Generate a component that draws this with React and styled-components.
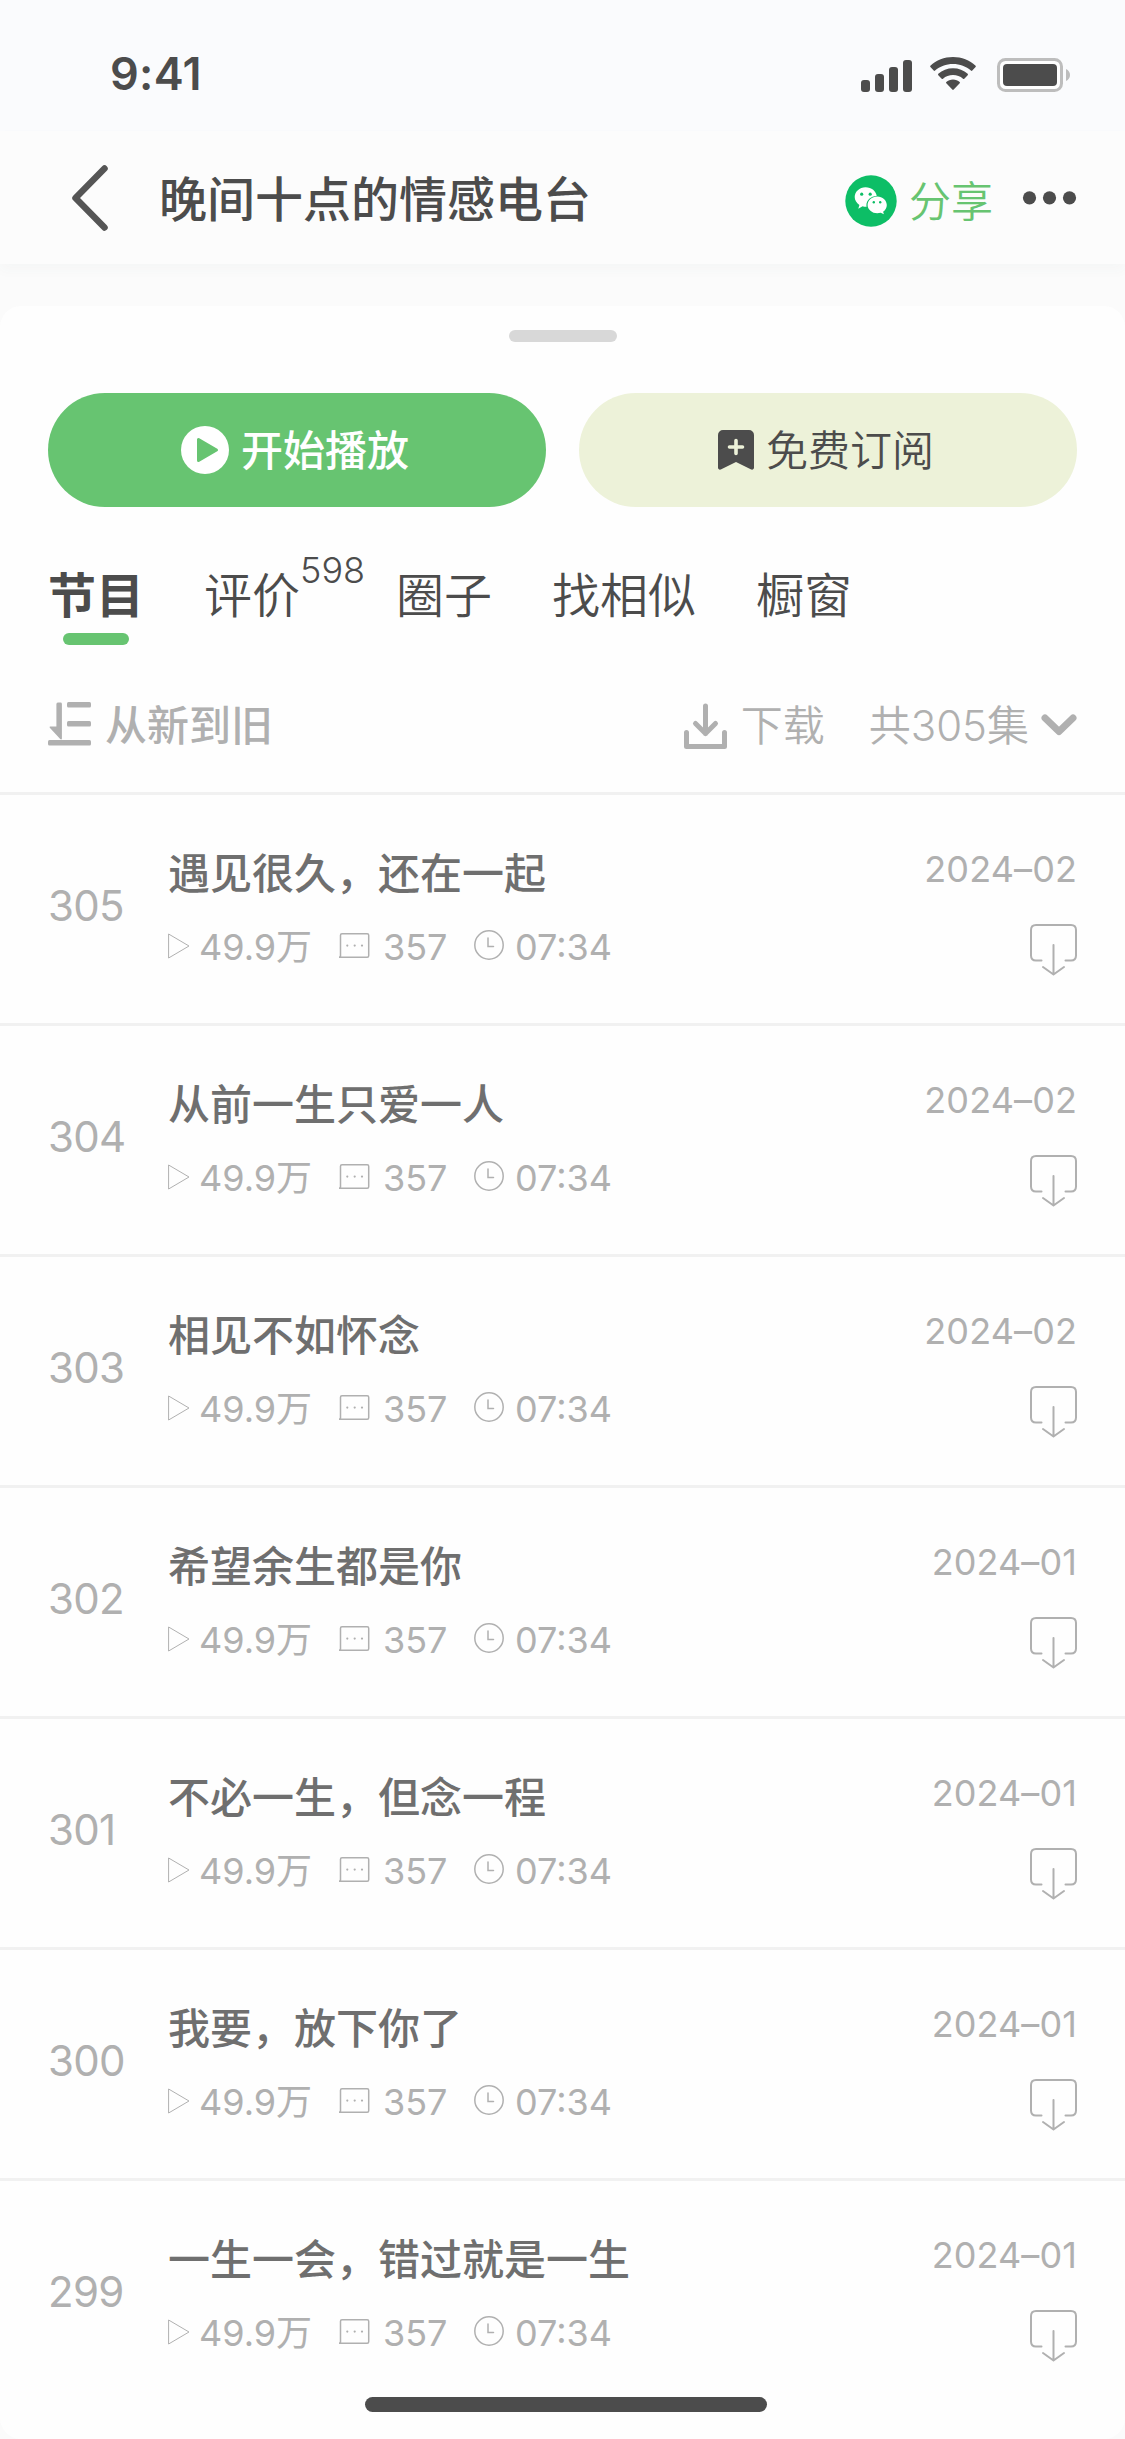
import React from "react";
import styled, { createGlobalStyle } from "styled-components";

const INK = "#4c4c4c";
const GREEN = "#67c471";
const MUTED = "#b0b0b0";

const GlobalStyle = createGlobalStyle`
  * { box-sizing: border-box; }
  body {
    margin: 0;
    background: #fbfbfb;
    font-family: Inter, "Noto Sans CJK SC", sans-serif;
    color: ${INK};
  }
  svg { display: block; flex: none; }
`;

const Screen = styled.div`
  position: relative;
  width: 1125px;
  height: 2439px;
  overflow: hidden;
  display: flex;
  flex-direction: column;
  background: #fbfbfb;
`;

const StatusBar = styled.div`
  height: 131px;
  flex: none;
  display: flex;
  align-items: flex-start;
  justify-content: space-between;
  padding: 46px 55px 0 110px;
  background: #fafbfd;
`;

const Clock = styled.span`
  font-size: 45px;
  line-height: 56px;
  font-weight: 560;
  letter-spacing: 0.3px;
`;

const StatusIcons = styled.div`
  display: flex;
  align-items: flex-start;
  gap: 18px;
  padding-top: 11px;
`;

const Header = styled.header`
  height: 133px;
  flex: none;
  display: flex;
  align-items: center;
  padding: 0 48px 0 70px;
  background: #fcfcfc;
  box-shadow: 0 6px 12px rgba(70, 110, 90, 0.03);
`;

const Title = styled.h1`
  flex: 1;
  margin: 0 0 0 49px;
  padding-top: 5px;
  font-size: 48px;
  line-height: 66px;
  font-weight: 500;
`;

const Share = styled.button`
  display: flex;
  align-items: center;
  gap: 12px;
  padding: 6px 0 0;
  margin-right: 29px;
  border: 0;
  background: none;
  font: 350 42px/54px Inter, "Noto Sans CJK SC", sans-serif;
  color: ${GREEN};
`;

const Sheet = styled.main`
  height: 2133px;
  margin-top: 42px;
  flex: none;
  background: #fefefe;
  border-radius: 21px;
`;

const Grip = styled.div`
  width: 108px;
  height: 12px;
  margin: 0 auto;
  border-radius: 6px;
  background: #d8d8d8;
`;

const GripArea = styled.div`
  height: 87px;
  padding-top: 24px;
`;

const Actions = styled.div`
  display: flex;
  gap: 33px;
  padding: 0 48px;
`;

const Action = styled.button`
  flex: 1;
  height: 114px;
  border: 0;
  border-radius: 57px;
  display: flex;
  align-items: center;
  justify-content: center;
  gap: 12px;
  padding: 0 4px 0 0;
  background: ${(p) => (p.$primary ? GREEN : "#edf2d9")};
  color: ${(p) => (p.$primary ? "#fff" : INK)};
  font: ${(p) => (p.$primary ? 500 : 350)} 42px/60px Inter, "Noto Sans CJK SC", sans-serif;
`;

const Label = styled.span`
  padding-top: 2px;
`;

const Tabs = styled.nav`
  height: 156px;
  display: flex;
  padding: 56px 48px 0;
`;

const Tab = styled.a`
  position: relative;
  margin-right: ${(p) => (p.$wide ? 96 : 60)}px;
  height: 82px;
  font-size: 48px;
  line-height: 66px;
  font-weight: ${(p) => (p.$active ? 700 : 350)};
  &::after {
    content: "";
    display: ${(p) => (p.$active ? "block" : "none")};
    width: 66px;
    height: 12px;
    margin: 4px auto 0;
    border-radius: 6px;
    background: ${GREEN};
  }
`;

const Count = styled.sup`
  position: absolute;
  left: 100%;
  top: -15px;
  font-size: 36px;
  line-height: 44px;
  font-weight: 350;
`;

const Tools = styled.div`
  height: 132px;
  display: flex;
  align-items: center;
  padding: 0 48px 3px;
  border-bottom: 3px solid #f1f1f1;
  color: ${MUTED};
`;

const Tool = styled.div`
  display: flex;
  align-items: center;
  gap: ${(p) => p.$gap || 14}px;
  height: 60px;
  font-size: 42px;
  line-height: 60px;
  font-weight: ${(p) => (p.$strong ? 500 : 350)};
  margin-right: ${(p) => (p.$push ? "auto" : "0")};
  margin-left: ${(p) => p.$before || 0}px;
`;

const Row = styled.article`
  height: 231px;
  display: grid;
  grid-template-columns: 120px 1fr auto;
  padding: 0 48px;
  border-bottom: ${(p) => (p.$last ? "0" : "3px solid #f1f1f1")};
  color: ${MUTED};
`;

const Num = styled.span`
  padding-top: 84px;
  font-size: 42px;
  line-height: 54px;
  font-weight: 370;
  letter-spacing: -0.7px;
`;

const Body = styled.div`
  padding-top: 49px;
`;

const Name = styled.h2`
  margin: 0;
  font-size: 42px;
  line-height: 60px;
  font-weight: 500;
  color: #6f6f6f;
`;

const Meta = styled.div`
  display: flex;
  align-items: flex-start;
  height: 48px;
  margin-top: 19px;
`;

const Stat = styled.span`
  display: flex;
  width: ${(p) => p.$w}px;
  gap: ${(p) => p.$gap}px;
  font-size: 36px;
  line-height: 48px;
  font-weight: 370;
  white-space: nowrap;
`;

const Side = styled.div`
  display: flex;
  flex-direction: column;
  align-items: flex-end;
  padding-top: 50px;
`;

const DateText = styled.time`
  height: 79px;
  font-size: 36px;
  line-height: 48px;
  font-weight: 370;
  letter-spacing: 0.1px;
`;

const HomeBar = styled.div`
  position: absolute;
  left: 364.5px;
  top: 2397px;
  width: 402px;
  height: 15px;
  border-radius: 8px;
  background: ${INK};
`;

const SignalIcon = () => (
  <svg width="51" height="35" viewBox="0 0 51 35" fill={INK}>
    <rect x="0" y="23" width="9" height="12" rx="3" />
    <rect x="14" y="17" width="9" height="18" rx="3" />
    <rect x="28" y="10" width="9" height="25" rx="3" />
    <rect x="42" y="3" width="9" height="32" rx="3" />
  </svg>
);

const WifiIcon = () => (
  <svg width="46" height="34" viewBox="0 0 46 34" fill={INK}>
    <path d="M23 0C14.3 0 6.300 3.300.4 8.700c-.4.400-.4 1 0 1.400L3.700 13.600c.4.400 1 .4 1.400 0C9.800 9.400 16.100 7 23 7s13.200 2.400 17.900 6.600c.4.400 1 .4 1.400 0l3.300-3.500c.4-.4.400-1 0-1.400C39.700 3.300 31.700 0 23 0z" />
    <path d="M23 11.300c-5.600 0-10.800 2-14.700 5.500-.4.400-.4 1 0 1.400l3.400 3.500c.4.400.9.400 1.300 0 2.700-2.300 6.200-3.600 10-3.600s7.300 1.300 10 3.600c.4.400.9.400 1.300 0l3.400-3.500c.4-.4.400-1 0-1.400-3.900-3.500-9.100-5.500-14.700-5.500z" />
    <path d="M23 22.600c-2.600 0-5 .9-6.700 2.400-.4.400-.4.900 0 1.300l6 6.300c.4.400 1 .4 1.400 0l6-6.300c.4-.4.400-.9 0-1.300-1.700-1.500-4.100-2.400-6.700-2.400z" />
  </svg>
);

const BatteryIcon = () => (
  <svg width="73" height="36" viewBox="0 0 73 36" style={{ marginLeft: 3 }}>
    <rect x="1.500" y="2.500" width="63" height="31" rx="7" fill="#fff" stroke="#bdbdbd" strokeWidth="3" />
    <rect x="6" y="7" width="54" height="22" rx="4" fill={INK} />
    <path d="M69 12c2.500 1 4 3.400 4 6s-1.500 5-4 6z" fill="#bdbdbd" />
  </svg>
);

const BackIcon = () => (
  <svg width="40" height="68" viewBox="0 0 40 68">
    <path d="M34.500 4.500 5.500 34l29 29.500" fill="none" stroke="#555" strokeWidth="6.500" strokeLinecap="round" strokeLinejoin="round" />
  </svg>
);

const WechatIcon = () => (
  <svg width="52" height="52" viewBox="0 0 52 52">
    <circle cx="26" cy="26" r="25.700" fill="#0dbe66" />
    <path d="M20.500 12.200c6 0 10.800 4 11.200 8.800-6 .2-10.300 4.300-10.300 9.200 0 .8.100 1.300.2 1.600-1.400.1-2.600-.1-4-.5L13.300 33.700l1.100-3.700c-3-2-4.700-4.900-4.700-7.900 0-5.500 4.900-9.900 10.800-9.900z" fill="#fff" />
    <path d="M32.300 21.400c5.200 0 9.500 3.900 9.500 8.600 0 2.800-1.400 5.200-3.700 6.700l.8 2.600-3.200-1.500c-1.200.3-2.200.5-3.400.5-5.300 0-9.700-3.800-9.700-8.300 0-4.700 4.400-8.600 9.700-8.600z" fill="#fff" />
    <g fill="#0dbe66">
      <circle cx="16.700" cy="19.200" r="1.600" />
      <circle cx="25.200" cy="19.200" r="1.600" />
      <circle cx="28.800" cy="27.200" r="1.200" />
      <circle cx="35.200" cy="27.200" r="1.200" />
    </g>
  </svg>
);

const MoreIcon = () => (
  <svg width="55" height="14" viewBox="0 0 55 14" fill={INK}>
    <circle cx="7.500" cy="6.800" r="6.600" />
    <circle cx="27.500" cy="6.800" r="6.600" />
    <circle cx="47.500" cy="6.800" r="6.600" />
  </svg>
);

const PlayIcon = () => (
  <svg width="48" height="48" viewBox="0 0 48 48">
    <circle cx="24" cy="24" r="24" fill="#fff" />
    <path d="M17.500 13.500v21l18-10.500z" fill={GREEN} stroke={GREEN} strokeWidth="3" strokeLinejoin="round" />
  </svg>
);

const BookmarkIcon = () => (
  <svg width="36" height="40" viewBox="0 0 36 40">
    <path d="M5 0h26a5 5 0 0 1 5 5v32.500c0 1.800-1.800 2.800-3.300 1.700L18 32 3.300 39.200C1.800 40.300 0 39.300 0 37.500V5a5 5 0 0 1 5-5z" fill={INK} />
    <path d="M18 10.500v13M11.500 17h13" stroke="#edf2d9" strokeWidth="3.600" strokeLinecap="round" />
  </svg>
);

const SortIcon = () => (
  <svg width="43" height="48" viewBox="0 0 43 48" fill={MUTED}>
    <path d="M10.500.5h2q1.400 0 1.400 1.400v34.500c0 1.200-1 1.300-1.700.6L2 25.900c-.8-1-.5-1.500.6-1.500h5.800V1.900Q8.400.5 10.500.5z" />
    <rect x="19" y="0" width="24" height="5.500" rx="1.500" />
    <rect x="19" y="19" width="24" height="5.500" rx="1.500" />
    <rect x="0" y="38" width="43" height="5.500" rx="1.500" />
  </svg>
);

const DownloadIcon = () => (
  <svg width="43" height="46" viewBox="0 0 43 46" fill="none" stroke={MUTED} strokeWidth="5" strokeLinecap="round" strokeLinejoin="round">
    <path d="M2.500 29.500v14h38v-14M21.500 3V30.500M11.500 20.500l10 10 10-10" />
  </svg>
);

const ChevronIcon = () => (
  <svg width="36" height="24" viewBox="0 0 36 24" fill="none" stroke={MUTED} strokeWidth="7" strokeLinecap="round" strokeLinejoin="round">
    <path d="M4 4l14 13.500L32 4" />
  </svg>
);

const StatPlay = () => (
  <svg width="22" height="40" viewBox="0 0 22 40" fill="none" stroke={MUTED} strokeWidth="1">
    <path d="M.6 11v24L21 23z" />
  </svg>
);

const StatComment = () => (
  <svg width="31" height="40" viewBox="0 0 31 40" fill="none" stroke={MUTED} strokeWidth="1.500">
    <path d="M.5 34.300h27.700q1.500 0 1.500-1.500V12.300q0-1.500-1.500-1.500H3q-1.500 0-1.500 1.500v20.800z" />
    <g fill={MUTED} stroke="none">
      <circle cx="8.300" cy="22.600" r="1.100" />
      <circle cx="15.700" cy="22.600" r="1.100" />
      <circle cx="23" cy="22.600" r="1.100" />
    </g>
  </svg>
);

const StatClock = () => (
  <svg width="30" height="40" viewBox="0 0 30 40" fill="none" stroke={MUTED} strokeWidth="1.500">
    <circle cx="15" cy="22" r="14.200" />
    <path d="M14 15v8.500h5.500" strokeLinecap="round" />
  </svg>
);

const SaveIcon = () => (
  <svg width="47" height="52" viewBox="0 0 47 52" fill="none" stroke={MUTED} strokeWidth="2" strokeLinecap="round" strokeLinejoin="round">
    <path d="M11.500 36.500H6q-5 0-5-5V6q0-5 5-5h35q5 0 5 5v25.500q0 5-5 5h-5.500M23.500 21v29M13 43l10.500 7.500L34 43" />
  </svg>
);

const episodes = [
  [305, "遇见很久，还在一起", "2024–02"],
  [304, "从前一生只爱一人", "2024–02"],
  [303, "相见不如怀念", "2024–02"],
  [302, "希望余生都是你", "2024–01"],
  [301, "不必一生，但念一程", "2024–01"],
  [300, "我要，放下你了", "2024–01"],
  [299, "一生一会，错过就是一生", "2024–01"],
];

function Episode({ num, name, date, last }) {
  return (
    <Row $last={last}>
      <Num>{num}</Num>
      <Body>
        <Name>{name}</Name>
        <Meta>
          <Stat $w={171} $gap={9}><StatPlay />49.9万</Stat>
          <Stat $w={135} $gap={13}><StatComment />357</Stat>
          <Stat $w={140} $gap={11}><StatClock />07:34</Stat>
        </Meta>
      </Body>
      <Side>
        <DateText>{date}</DateText>
        <SaveIcon />
      </Side>
    </Row>
  );
}

export default function App() {
  return (
    <>
      <GlobalStyle />
      <Screen>
        <StatusBar>
          <Clock>9:41</Clock>
          <StatusIcons>
            <SignalIcon />
            <WifiIcon />
            <BatteryIcon />
          </StatusIcons>
        </StatusBar>
        <Header>
          <BackIcon />
          <Title>晚间十点的情感电台</Title>
          <Share><WechatIcon /><Label>分享</Label></Share>
          <MoreIcon />
        </Header>
        <Sheet>
          <GripArea><Grip /></GripArea>
          <Actions>
            <Action $primary><PlayIcon /><Label>开始播放</Label></Action>
            <Action><BookmarkIcon /><Label>免费订阅</Label></Action>
          </Actions>
          <Tabs>
            <Tab $active>节目</Tab>
            <Tab $wide>评价<Count>598</Count></Tab>
            <Tab>圈子</Tab>
            <Tab>找相似</Tab>
            <Tab>橱窗</Tab>
          </Tabs>
          <Tools>
            <Tool $strong $push><SortIcon />从新到旧</Tool>
            <Tool><DownloadIcon />下载</Tool>
            <Tool $before={44} $gap={12}>共305集<ChevronIcon /></Tool>
          </Tools>
          {episodes.map(([num, name, date], i) => (
            <Episode key={num} num={num} name={name} date={date} last={i === episodes.length - 1} />
          ))}
        </Sheet>
        <HomeBar />
      </Screen>
    </>
  );
}
